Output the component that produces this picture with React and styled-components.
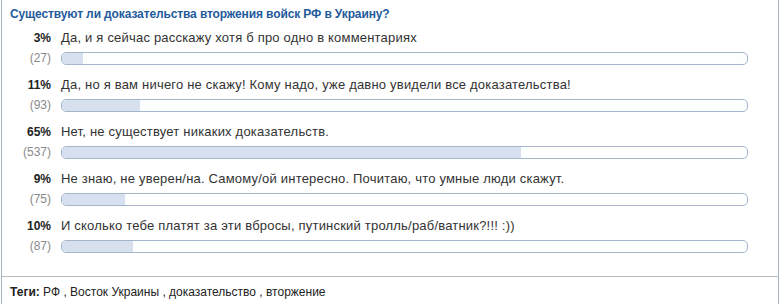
import React from 'react';
import styled, { createGlobalStyle } from 'styled-components';

const GlobalStyle = createGlobalStyle`
  body {
    margin: 0;
    background: #fff;
    font-family: "Liberation Sans", Arial, sans-serif;
  }
`

const Panel = styled.div`
  width: 776px;
  margin-left: 1px;
  border-left: 1px solid #a9b4c2;
  border-right: 1px solid #a9b4c2;
`

const Poll = styled.div`
  padding: 6px 30px 22px 8px;
  border-bottom: 1px solid #b4bac2;
`

const Title = styled.div`
  font-size: 12px;
  font-weight: bold;
  line-height: 16px;
  letter-spacing: -0.12px;
  color: #1f5b9c;
  margin-bottom: 8px;
`

const Option = styled.div`
  display: grid;
  grid-template-columns: 41px 1fr;
  column-gap: 10px;
  row-gap: 4px;
  margin-bottom: 11px;
  font-size: 12px;
  line-height: 16px;
  &:last-child { margin-bottom: 0; }
`

const Percent = styled.div`
  text-align: right;
  font-weight: bold;
  color: #222;
`

const Label = styled.div`
  color: #333;
  font-size: 13px;
  letter-spacing: 0.2px;
`

const Count = styled.div`
  text-align: right;
  color: #8a8a8a;
`

const Bar = styled.div`
  align-self: center;
  height: 11px;
  border: 1px solid #a3b6cb;
  border-radius: 5px;
  background: #fdfefe;
  overflow: hidden;
`

const Fill = styled.div`
  height: 100%;
  background: #d6e0ee;
`

const Tags = styled.div`
  padding: 7px 8px 4px;
  font-size: 12px;
  line-height: 16px;
  color: #222;
  b { font-weight: bold; }
`

const options = [
  { pct: 3, count: 27, text: 'Да, и я сейчас расскажу хотя б про одно в комментариях' },
  { pct: 11, count: 93, text: 'Да, но я вам ничего не скажу! Кому надо, уже давно увидели все доказательства!' },
  { pct: 65, count: 537, text: 'Нет, не существует никаких доказательств.' },
  { pct: 9, count: 75, text: 'Не знаю, не уверен/на. Самому/ой интересно. Почитаю, что умные люди скажут.' },
  { pct: 10, count: 87, text: 'И сколько тебе платят за эти вбросы, путинский тролль/раб/ватник?!!! :))' },
]

const App = () => {
  return (
    <Panel>
      <GlobalStyle />
      <Poll>
        <Title>Существуют ли доказательства вторжения войск РФ в Украину?</Title>
        {options.map((o) => (
          <Option key={o.count}>
            <Percent>{o.pct}%</Percent>
            <Label>{o.text}</Label>
            <Count>({o.count})</Count>
            <Bar>
              <Fill style={{ width: `${o.pct * 1.03}%` }} />
            </Bar>
          </Option>
        ))}
      </Poll>
      <Tags>
        <b>Теги:</b> РФ , Восток Украины , доказательство , вторжение
      </Tags>
    </Panel>
  );
};

export default App;
